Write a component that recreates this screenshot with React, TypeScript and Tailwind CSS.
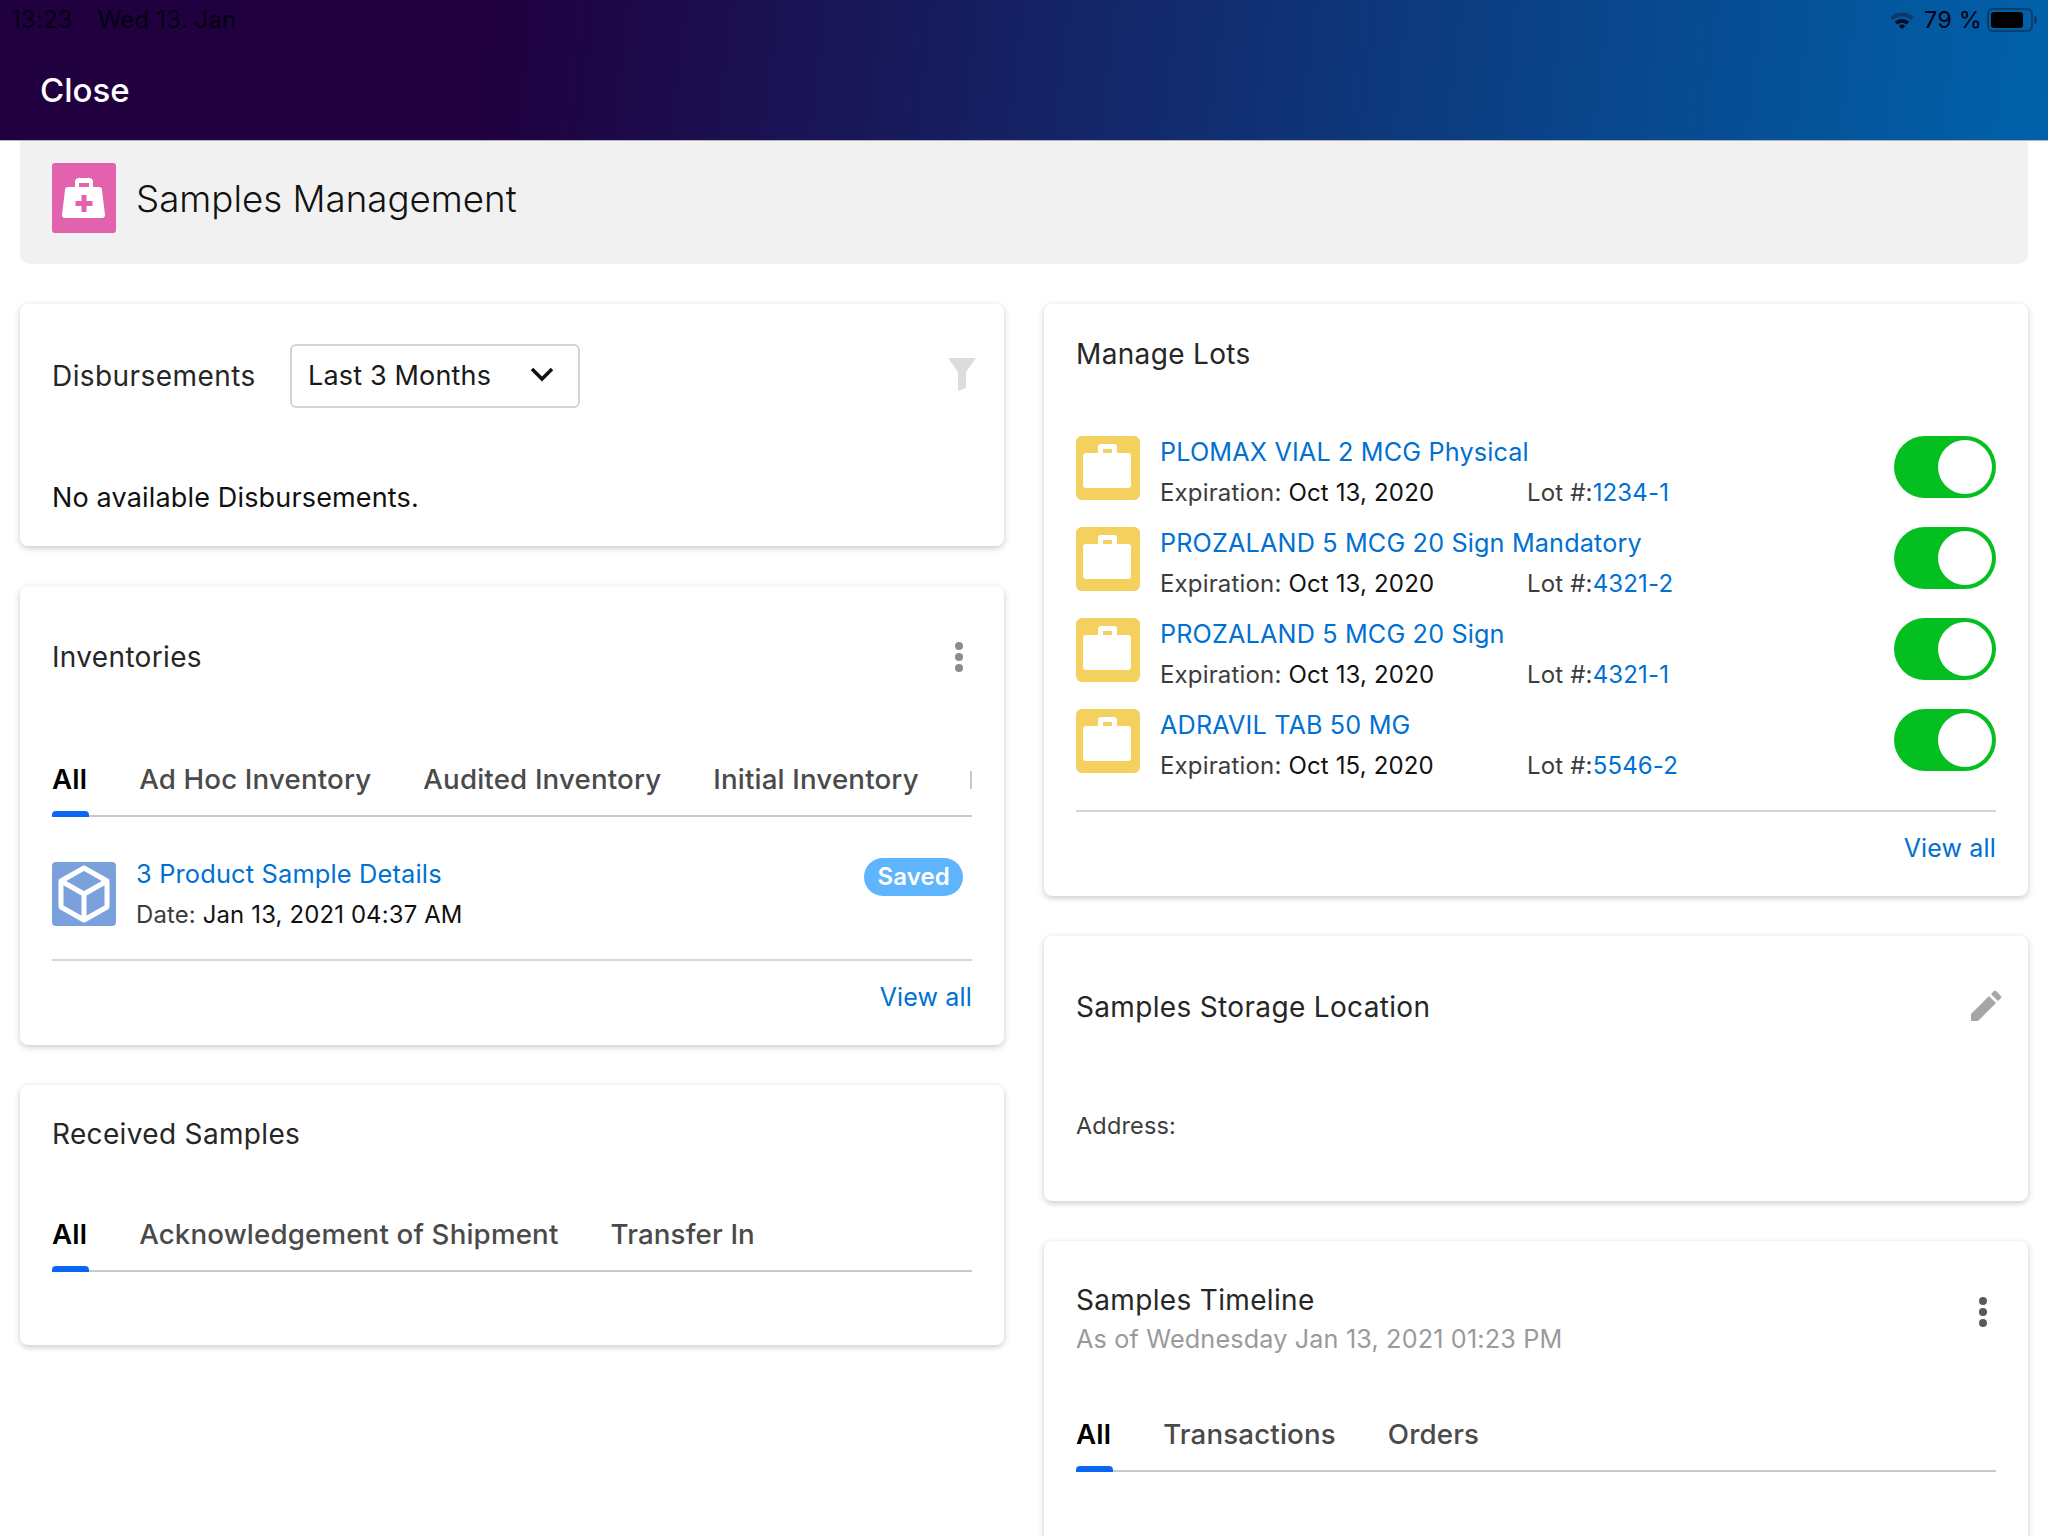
import React from "react";

const blue = "text-[#0070d2]";
const cardTitle = "text-[28px] tracking-[0.012em] text-[#262626]";

const lots = [
  { name: "PLOMAX VIAL 2 MCG Physical", date: "Oct 13, 2020", lot: "1234-1" },
  { name: "PROZALAND 5 MCG 20 Sign Mandatory", date: "Oct 13, 2020", lot: "4321-2" },
  { name: "PROZALAND 5 MCG 20 Sign", date: "Oct 13, 2020", lot: "4321-1" },
  { name: "ADRAVIL TAB 50 MG", date: "Oct 15, 2020", lot: "5546-2" },
];

function Card({ className, children }: { className: string; children: React.ReactNode }) {
  return (
    <div className={`rounded-[8px] bg-white px-8 shadow-[0_2px_6px_rgba(0,0,0,0.22)] ${className}`}>
      {children}
    </div>
  );
}

function Kebab({ color }: { color: string }) {
  return (
    <svg width="10" height="32" viewBox="0 0 10 32" className={color}>
      <circle cx="5" cy="5" r="4" fill="currentColor" />
      <circle cx="5" cy="16" r="4" fill="currentColor" />
      <circle cx="5" cy="27" r="4" fill="currentColor" />
    </svg>
  );
}

function Tabs({ items, tail }: { items: string[]; tail?: boolean }) {
  return (
    <div className="relative flex h-[55px] items-start border-b-2 border-[#c9c9c9]">
      <div className="flex items-center gap-[52px]">
        <span className="text-[27.7px] leading-[34px] font-semibold text-black">All</span>
        {items.map((t) => (
          <span key={t} className="text-[27.7px] leading-[34px] font-medium text-[#4a4a4a]">
            {t}
          </span>
        ))}
      </div>
      {tail && <span className="absolute top-[9px] right-0 h-[18px] w-[2px] bg-[#c9c9c9]" />}
      <span className="absolute bottom-[-2px] left-0 h-[6px] w-[37px] rounded-t-[4px] bg-[#0b66f5]" />
    </div>
  );
}

function ViewAll() {
  return <div className={`text-right text-[25px] leading-[32px] ${blue}`}>View all</div>;
}

function CaseIcon() {
  return (
    <div className="h-16 w-16 shrink-0 rounded-[6px] bg-[#f4d05f]">
      <svg width="64" height="64" viewBox="0 0 64 64">
        <path
          d="M22 17v-6a3 3 0 0 1 3-3h13a3 3 0 0 1 3 3v6h11a3 3 0 0 1 3 3v29a3 3 0 0 1-3 3H10a3 3 0 0 1-3-3V20a3 3 0 0 1 3-3h12Zm5 0h9v-4h-9v4Z"
          fill="#fff"
          fillRule="evenodd"
        />
      </svg>
    </div>
  );
}

function Toggle() {
  return (
    <div className="flex h-[62px] w-[102px] shrink-0 items-center justify-end rounded-full bg-[#04bf20] pr-[4px]">
      <span className="h-[54px] w-[54px] rounded-full bg-white" />
    </div>
  );
}

export default function App() {
  return (
    <div className="h-[1536px] w-[2048px] overflow-hidden bg-white [font-family:Inter,sans-serif] tracking-[0.01em] text-black">
      {/* Top bar */}
      <div className="h-[141px] border-b border-[#b5b5b5] bg-[linear-gradient(97deg,#20003f_24%,#0062aa_100%)]">
        <div className="flex h-10 items-center justify-between pr-[11px] pl-[11px] text-[23.5px] leading-[40px] text-[#050010]">
          <div className="flex gap-[25px] text-[24px]">
            <span>13:23</span>
            <span>Wed 13. Jan</span>
          </div>
          <div className="flex items-center gap-[5px]">
            <svg width="28" height="20" viewBox="0 0 28 22" className="mr-[3px]">
              <path d="M1 8a19 19 0 0 1 26 0l-3 3a15 15 0 0 0-20 0Z" fill="#0a3a6a" />
              <path d="M6 13a12 12 0 0 1 16 0l-3 3a8 8 0 0 0-10 0Z" fill="#050a20" />
              <path d="M10.5 17.5a5 5 0 0 1 7 0L14 21Z" fill="#050a20" />
            </svg>
            <span>79 %</span>
            <div className="flex items-center">
              <div className="flex h-[24px] w-[46px] items-center rounded-[6px] border-2 border-[#0d3c6e] px-[2px]">
                <span className="h-[16px] w-[32px] rounded-[3px] bg-black" />
              </div>
              <span className="ml-[1px] h-[8px] w-[3px] rounded-r-full bg-[#0d3c6e]" />
            </div>
          </div>
        </div>
        <div className="pt-[22px] pl-[40px] text-[33px] leading-[56px] font-medium tracking-normal text-white">
          Close
        </div>
      </div>

      <div className="px-5">
        {/* Title */}
        <div className="flex h-[123px] items-start gap-5 rounded-b-[10px] bg-[#f1f1f1] px-8 pt-[22px]">
          <div className="flex h-[70px] w-16 items-center justify-center rounded-[3px] bg-[#e362ae]">
            <svg width="44" height="44" viewBox="0 0 44 44">
              <path
                d="M13 11V6a4 4 0 0 1 4-4h10a4 4 0 0 1 4 4v5h6a3 3 0 0 1 3 3l3 25a3 3 0 0 1-3 3H3a3 3 0 0 1-3-3l3-25a3 3 0 0 1 3-3h7Zm4 0h10V7H17v4Z"
                fill="#fff"
                fillRule="evenodd"
              />
              <path d="M19.5 19h5v6h6v5h-6v6h-5v-6h-6v-5h6Z" fill="#e362ae" />
            </svg>
          </div>
          <div className="text-[36.7px] leading-[71px] font-light tracking-normal text-[#111]">
            Samples Management
          </div>
        </div>

        <div className="mt-10 grid grid-cols-[984px_984px] gap-x-10">
          {/* Left column */}
          <div className="flex flex-col gap-10">
            <Card className="relative h-[242px] pt-[40px]">
              <div className="flex items-center">
                <div className="w-[238px] text-[28px] leading-[40px] tracking-[0.015em] text-[#262626]">
                  Disbursements
                </div>
                <div className="flex h-[64px] w-[290px] items-center justify-between rounded-[6px] border-2 border-[#d4d4d4] pr-[23px] pl-[16px]">
                  <span className="text-[27px] leading-[34px] text-[#1a1a1a]">Last 3 Months</span>
                  <svg width="26" height="16" viewBox="0 0 26 16" fill="none" className="mb-[5px]">
                    <path d="M3 3l10 10L23 3" stroke="#111" strokeWidth="3.5" />
                  </svg>
                </div>
              </div>
              <svg width="30" height="34" viewBox="0 0 30 34" className="absolute top-[53px] right-[27px]">
                <path d="M1 1h28L19 15v16l-8 3V15Z" fill="#dcdcdc" />
              </svg>
              <div className="mt-[73px] text-[27px] leading-[34px] text-[#111]">No available Disbursements.</div>
            </Card>

            <Card className="h-[459px] pt-[51px]">
              <div className="flex items-center justify-between pr-[8px]">
                <div className={`leading-[40px] ${cardTitle}`}>Inventories</div>
                <Kebab color="text-[#8c8c8c]" />
              </div>
              <div className="mt-[85px]">
                <Tabs items={["Ad Hoc Inventory", "Audited Inventory", "Initial Inventory"]} tail />
              </div>
              <div className="mt-[45px] flex h-[97px] items-start gap-5">
                <div className="h-16 w-16 rounded-[4px] bg-[#7ba1dc]">
                  <svg width="64" height="64" viewBox="0 0 64 64" fill="none" stroke="#fff" strokeWidth="5" strokeLinejoin="round">
                    <path d="M32 6l23 13v26L32 58 9 45V19Z" />
                    <path d="M9 19l23 13 23-13M32 32v26" />
                  </svg>
                </div>
                <div className="mt-[-4px] flex-1">
                  <div className={`text-[25.4px] leading-[32px] ${blue}`}>3 Product Sample Details</div>
                  <div className="mt-[9px] text-[23.9px] leading-[32px] text-[#3c3c3c]">
                    Date: <span className="text-[#111]">Jan 13, 2021 04:37 AM</span>
                  </div>
                </div>
                <div className="mt-[-4px] mr-[9px] rounded-full bg-[#5eb4fd] px-[13px] text-[24px] leading-[38px] font-semibold text-white">
                  Saved
                </div>
              </div>
              <div className="border-t-2 border-[#d6d6d6] pt-[20px]">
                <ViewAll />
              </div>
            </Card>

            <Card className="h-[260px] pt-[29px]">
              <div className={`leading-[40px] ${cardTitle}`}>Received Samples</div>
              <div className="mt-[63px]">
                <Tabs items={["Acknowledgement of Shipment", "Transfer In"]} />
              </div>
            </Card>
          </div>

          {/* Right column */}
          <div className="flex flex-col gap-10">
            <Card className="h-[592px] pt-[30px]">
              <div className={`leading-[40px] ${cardTitle}`}>Manage Lots</div>
              <div className="mt-[62px] flex flex-col gap-[27px]">
                {lots.map((l) => (
                  <div key={l.name} className="flex h-16 items-start gap-5">
                    <CaseIcon />
                    <div className="flex-1">
                      <div className={`text-[25.2px] leading-[32px] ${blue}`}>{l.name}</div>
                      <div className="mt-[9px] flex text-[24px] leading-[32px] text-[#3c3c3c]">
                        <span className="w-[367px]">
                          Expiration: <span className="text-[#111]">{l.date}</span>
                        </span>
                        <span>
                          Lot #:<span className={blue}>{l.lot}</span>
                        </span>
                      </div>
                    </div>
                    <Toggle />
                  </div>
                ))}
              </div>
              <div className="mt-[37px] border-t-2 border-[#d6d6d6] pt-[20px]">
                <ViewAll />
              </div>
            </Card>

            <Card className="relative h-[265px] pt-[51px]">
              <div className={`leading-[40px] ${cardTitle}`}>Samples Storage Location</div>
              <svg width="32" height="32" viewBox="0 0 32 32" className="absolute top-[54px] right-[26px]">
                <path d="M1 31v-7L19 6l7 7L8 31Z M21 4l3-3a1.5 1.5 0 0 1 2 0l5 5a1.5 1.5 0 0 1 0 2l-3 3Z" fill="#a6a6a6" />
              </svg>
              <div className="mt-[83px] text-[23.5px] leading-[32px] text-[#3c3c3c]">Address:</div>
            </Card>

            <Card className="h-[400px] pt-[41px]">
              <div className="flex items-start justify-between pr-[8px]">
                <div>
                  <div className={`leading-[36px] ${cardTitle}`}>Samples Timeline</div>
                  <div className="mt-[3px] text-[25.2px] leading-[36px] text-[#9a9a9a]">
                    As of Wednesday Jan 13, 2021 01:23 PM
                  </div>
                </div>
                <div className="mt-[14px]">
                  <Kebab color="text-[#5a5a5a]" />
                </div>
              </div>
              <div className="mt-[60px]">
                <Tabs items={["Transactions", "Orders"]} />
              </div>
            </Card>
          </div>
        </div>
      </div>
    </div>
  );
}
